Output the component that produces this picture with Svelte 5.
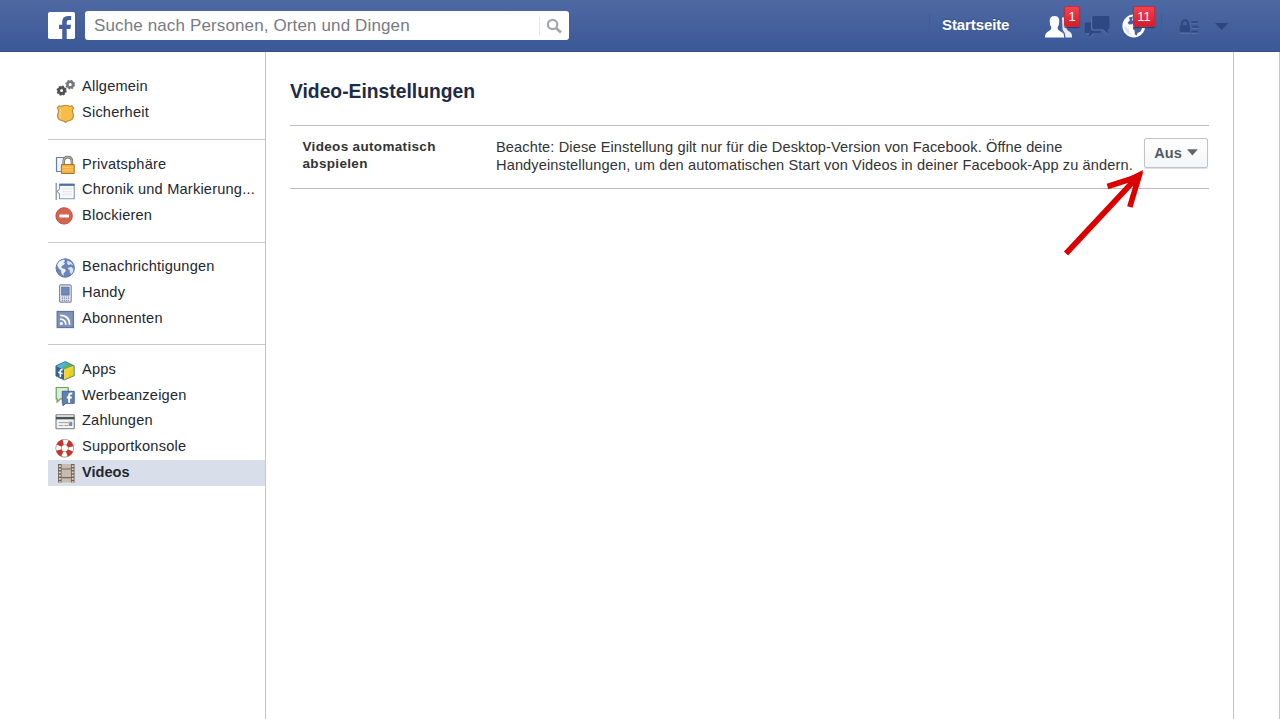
<script>
  const groups = [
    [
      { icon: 'gears', label: 'Allgemein' },
      { icon: 'badge', label: 'Sicherheit' }
    ],
    [
      { icon: 'lock', label: 'Privatsphäre' },
      { icon: 'timeline', label: 'Chronik und Markierung...' },
      { icon: 'block', label: 'Blockieren' }
    ],
    [
      { icon: 'globe', label: 'Benachrichtigungen' },
      { icon: 'phone', label: 'Handy' },
      { icon: 'feed', label: 'Abonnenten' }
    ],
    [
      { icon: 'apps', label: 'Apps' },
      { icon: 'ads', label: 'Werbeanzeigen' },
      { icon: 'card', label: 'Zahlungen' },
      { icon: 'ring', label: 'Supportkonsole' },
      { icon: 'film', label: 'Videos', active: true }
    ]
  ];
</script>

{#snippet itemIcon(name)}
  <svg class="icon" width="20" height="20" viewBox="0 0 20 20">
    {#if name === 'gears'}
      <circle cx="6.6" cy="12.6" r="2.9" fill="none" stroke="#505256" stroke-width="2.8" />
      <circle cx="6.6" cy="12.6" r="4.3" fill="none" stroke="#505256" stroke-width="1.6" stroke-dasharray="1.8 1.58" />
      <circle cx="15.2" cy="6.6" r="2.8" fill="none" stroke="#77797d" stroke-width="2.5" />
      <circle cx="15.2" cy="6.6" r="4.1" fill="none" stroke="#77797d" stroke-width="1.5" stroke-dasharray="1.7 1.52" />
    {:else if name === 'badge'}
      <path d="M4.2 2.7Q6 4 7.8 2.8Q10.5 1.7 13.2 2.8Q15 4 16.8 2.7L18.6 5Q16.8 7.5 17.8 10Q19.4 14 16.8 16.5Q14.6 17.9 12.8 17.8L10.5 19.5L8.2 17.8Q6.4 17.9 4.2 16.5Q1.6 14 3.2 10Q4.2 7.5 2.4 5Z" fill="#f8bd48" stroke="#bd8b42" stroke-width="1.2" />
      <path d="M5.2 5.5Q6.4 8.5 5 11.5Q4.2 14 6.2 15.5" fill="none" stroke="#ffda83" stroke-width="1" />
    {:else if name === 'lock'}
      <path d="M9 2.5H1.5V16.5H6" fill="#f3f6fc" stroke="#667fae" stroke-width="1.2" />
      <path d="M8.7 10V6.3Q8.7 2.1 12.8 2.1Q16.9 2.1 16.9 6.3V10" fill="none" stroke="#777568" stroke-width="2.6" />
      <path d="M8.7 10V6.3Q8.7 2.1 12.8 2.1Q16.9 2.1 16.9 6.3V10" fill="none" stroke="#c9c6b5" stroke-width=".9" />
      <rect x="6.4" y="9.5" width="12.8" height="9" rx=".6" fill="#f4ae42" stroke="#a9742f" stroke-width="1.1" />
      <path d="M7.5 12.3H18.2M7.5 15.2H18.2" stroke="#ffd06c" stroke-width="1" />
    {:else if name === 'timeline'}
      <path d="M1.2 2V19" stroke="#7189b4" stroke-width="1.2" />
      <path d="M4.5 3.3H19.3V17.7H4.5V13L2.2 10.5L4.5 8Z" fill="#f8f9fb" stroke="#8d96a8" stroke-width="1.1" />
      <path d="M4.5 3.8H19.3" stroke="#5270a8" stroke-width="2.2" />
      <path d="M7 7.5H17M7 10.5H17M7 13.5H17" stroke="#e8e9ed" stroke-width="1.4" />
    {:else if name === 'block'}
      <circle cx="9.1" cy="9.9" r="8.2" fill="#d3644f" stroke="#c05243" stroke-width="1" />
      <rect x="4.3" y="8.4" width="9.7" height="3" rx=".7" fill="#fff" />
    {:else if name === 'globe'}
      <circle cx="10.2" cy="10" r="9.2" fill="#6886ba" stroke="#5d75a5" stroke-width="1" />
      <path d="M2 7Q4 2.6 9 1.6L10.2 3.2L8.2 4L10 5.8L7.6 7.5L6 9.3L7.7 10.5L10 11L10.9 13L8.7 15.2L8.4 18L6.3 15L6.2 12.5L3.9 10.4L2.6 8Z" fill="#edf2fa" />
      <path d="M12.5 2.5L16.4 4.4L18.2 7.2L15.4 6.2L13.4 7.3L12 5.2ZM13.6 9.6L16.5 9L18.5 11Q18.4 14.4 16.3 16.3L14.7 14.2L14.7 12L12.9 11Z" fill="#dae3f2" />
    {:else if name === 'phone'}
      <rect x="4.6" y=".9" width="11.6" height="17.3" rx="1.3" fill="#f1f4f9" stroke="#7c8baa" stroke-width="1.2" />
      <rect x="6.7" y="3.1" width="7.4" height="8" fill="#7189b8" stroke="#526d9f" stroke-width=".8" />
      <path d="M6.6 13H14.2M6.6 14.7H14.2M6.6 16.4H14.2" stroke="#7586a7" stroke-width="1" stroke-dasharray="1.4 .7" />
    {:else if name === 'feed'}
      <rect x="2.2" y="2.5" width="16.2" height="16" fill="#8093ba" stroke="#61759f" stroke-width="1.3" />
      <circle cx="6.4" cy="14.5" r="1.5" fill="#fff" />
      <path d="M5.2 10.1Q10.8 10.1 10.8 15.8M5.2 6.3Q14.6 6.3 14.6 15.8" fill="none" stroke="#fff" stroke-width="1.7" />
    {:else if name === 'apps'}
      <path d="M.9 4.8L9.2 8.4V19L.9 15Z" fill="#355fa5" />
      <path d="M9.2 8.4L19.2 4.8V14.7L9.2 19Z" fill="#f5d629" />
      <path d="M19.2 4.8V14.7L14 17V12Z" fill="#dfd329" />
      <path d="M.9 4.8L10.2 .6L19.2 4.8L9.2 8.4Z" fill="#67ad5b" />
      <path d="M.9 4.8L10.2 .6L13 2L6.7 7.3Z" fill="#4bb4e2" />
      <path d="M.9 4.8L10.2 .6L19.2 4.8V14.7L9.2 19L.9 15Z" fill="none" stroke="#3d6e8d" stroke-width=".8" />
      <path d="M7.6 8.7Q5.2 8 5.4 10.5V16M3.2 11.2L7.7 12.6" fill="none" stroke="#fff" stroke-width="1.6" />
    {:else if name === 'ads'}
      <path d="M1.2 1.5H13.2V12.9H5.4L2.1 16V12.9H1.2Z" fill="#d9edd2" stroke="#6b9d69" stroke-width="1.2" />
      <path d="M7.3 5.3H19.2V17.3H11L7.9 19.7V17.3H7.3Z" fill="#627fb3" stroke="#45659e" stroke-width="1" />
      <path d="M17.3 7.6Q13.9 6.9 14.1 10.2V16.7M11.8 11.5H16.8" fill="none" stroke="#fff" stroke-width="2" />
    {:else if name === 'card'}
      <rect x="1" y="2.8" width="18.3" height="14" rx=".8" fill="#f3f3f2" stroke="#777b81" stroke-width="1.1" />
      <path d="M1 6.1H19.3" stroke="#4d5054" stroke-width="2.5" />
      <path d="M3.7 10.6H13M3.7 13.5H8.4M9.4 13.5H13" stroke="#9ca2a8" stroke-width="1" />
      <rect x="13.8" y="9.8" width="3.4" height="4.2" fill="#6d8ec2" />
      <path d="M13 10.6H15" stroke="#edb750" stroke-width="1.5" />
    {:else if name === 'ring'}
      <circle cx="9.7" cy="10.2" r="6.2" fill="none" stroke="#8d7770" stroke-width="6" />
      <circle cx="9.7" cy="10.2" r="6.2" fill="none" stroke="#fff" stroke-width="4.8" />
      <circle cx="9.7" cy="10.2" r="6.2" fill="none" stroke="#c5352c" stroke-width="5.4" stroke-dasharray="5.2 4.539" transform="rotate(21 9.7 10.2)" />
    {:else if name === 'film'}
      <path d="M3 1V19.5H19.5V1Z" fill="#c8bbb0" />
      <path d="M4.8 1V19.5M17.7 1V19.5" stroke="#6d6158" stroke-width="3.5" />
      <path d="M4.8 2.2V19.5M17.7 2.2V19.5" stroke="#e6dfd7" stroke-width="1.8" stroke-dasharray="1.7 1.5" />
      <path d="M6.5 6H16M6.5 14.7H16" stroke="#75695f" stroke-width="1.2" />
    {/if}
  </svg>
{/snippet}

<header>
  <svg class="logo" width="27" height="27" viewBox="0 0 27 27">
    <rect width="27" height="27" rx="1.8" fill="#fff" />
    <path d="M14.2 27V16.9H11V12.8H14.2V10Q14.2 3.9 20 3.9H23.2V8H21Q18.7 8 18.7 10.2V12.8H23L22.4 16.9H18.7V27Z" fill="#45619d" />
  </svg>
  <div class="search">
    <span>Suche nach Personen, Orten und Dingen</span>
    <svg width="30" height="20" viewBox="0 0 30 20">
      <path d="M.5 1V19" stroke="#e4e6ea" />
      <circle cx="13.6" cy="8.5" r="4.7" fill="none" stroke="#a3a6ac" stroke-width="2.2" />
      <path d="M17 11.9L22 16.6" stroke="#a3a6ac" stroke-width="2.7" />
    </svg>
  </div>
  <nav>
    <i class="sep"></i>
    <span class="home">Startseite</span>
    <div class="jewel people">
      <svg width="28" height="24" viewBox="0 0 28 24">
        <path d="M17 1.6Q23 0 23 6.5Q23 9.8 21.5 12Q21.4 14 23.5 15Q27.3 16.4 27 21.4H18Z" fill="#e9edf5" />
        <path d="M9.5 0Q14.3 0 14.3 5Q14.3 9 12.7 11.1Q12.2 14 14.8 15Q19 16.5 18.7 21.4H0Q-.1 16.5 4 15Q6.7 14 6.2 11.1Q4.7 9 4.7 5Q4.7 0 9.5 0Z" fill="#fff" />
        <path d="M16.2 2Q14.4 6 16.2 11Q16 13.6 17.6 15Q19.8 17 19.8 22" fill="none" stroke="#4864a0" stroke-width="1.3" />
      </svg>
      <b class="count one">1</b>
    </div>
    <svg class="chat" width="27" height="24" viewBox="0 0 27 24">
      <path d="M1 7.5H7V15.5H17V18.1H9L5.2 22.5V18.1H2Q.8 18.1.8 16.5V8Z" fill="#2d4882" />
      <path d="M9.5 1H24Q25.4 1 25.4 2.5V13Q25.4 14.4 24 14.4H23.7V19L19.4 14.4H9.5Q8.2 14.4 8.2 13V2.5Q8.2 1 9.5 1Z" fill="#2d4882" />
      <path d="M7.6 3V13Q7.6 15 9.5 15H19.2L23.8 19.6M2 18.7H5M5.6 23L9.4 18.8" stroke="#6079ae" stroke-width=".8" fill="none" />
    </svg>
    <div class="jewel world">
      <svg width="24" height="24" viewBox="0 0 24 24">
        <circle cx="11.8" cy="12" r="11.4" fill="#fff" />
        <path d="M7 3.5L11 2.5L10 6L12.5 8.5L9.8 10.2L7 10.4L5.6 8.4L7.8 6.4Z" fill="#45629f" />
        <path d="M11.2 13L14.2 12L18 13.6L20.4 13.4L18.6 17.4L15.6 19L14.6 21.8L12.8 20L12.6 16.6L10.8 15Z" fill="#45629f" />
        <path d="M2.2 10.2L4.8 13.4L7.2 15.2L7.4 18.4L10.2 21.8L6 20L2.8 15.6Z" fill="#dce3f0" />
      </svg>
      <b class="count two">11</b>
    </div>
    <i class="sep last"></i>
    <svg class="privacy" width="20" height="16" viewBox="0 0 20 16">
      <path d="M3.1 8V4.4Q3.1 1.2 6 1.2Q8.9 1.2 8.9 4.4V8" fill="none" stroke="#2e4881" stroke-width="2" />
      <rect x=".8" y="6.2" width="10.2" height="7.2" rx=".8" fill="#2e4881" />
      <path d="M1 14.2H11M12.5 4.6H19M13.5 9.2H19M12.5 14.2H19" stroke="#637db1" stroke-width=".8" />
      <path d="M12.5 3.2H19M13.5 7.8H19M12.5 12.6H19" stroke="#2e4881" stroke-width="1.9" />
    </svg>
    <svg class="menu" width="14" height="8" viewBox="0 0 14 8"><path d="M0 0H13.4L6.7 7Z" fill="#2c467e" /></svg>
  </nav>
</header>

<main>
  <aside>
    {#each groups as group}
      <ul>
        {#each group as item}
          <li class:active={item.active}>
            {@render itemIcon(item.icon)}
            <span>{item.label}</span>
          </li>
        {/each}
      </ul>
    {/each}
  </aside>
  <section>
    <h1>Video-Einstellungen</h1>
    <div class="setting">
      <h2>Videos automatisch<br />abspielen</h2>
      <p>
        <span>Beachte: Diese Einstellung gilt nur für die Desktop-Version von Facebook. Öffne deine</span><br />
        <span>Handyeinstellungen, um den automatischen Start von Videos in deiner Facebook-App zu ändern.</span>
      </p>
      <button>Aus<svg width="11" height="7" viewBox="0 0 11 7"><path d="M0 .3H10.8L5.4 6.4Z" fill="#62656c" /></svg></button>
    </div>
  </section>
</main>

<svg class="arrow" width="84" height="90" viewBox="0 0 84 90">
  <path d="M6 84.5L77 8.5M47.5 17.5L79 7.4L69.8 38" fill="none" stroke="#db0000" stroke-width="5.6" />
  <path d="M70 7.5L83 1L78.5 17Z" fill="#db0000" />
</svg>

<style>
  :global(body) {
    margin: 0;
    background: #fff;
    overflow: hidden;
    font-family: "Liberation Sans", Arial, sans-serif;
  }
  header {
    height: 52px;
    box-sizing: border-box;
    display: flex;
    align-items: flex-start;
    padding-left: 48px;
    background: linear-gradient(#4e69a2, #3c5998 94%);
    border-bottom: 1px solid #34508b;
  }
  .logo { margin-top: 12px; }
  .search {
    box-sizing: border-box;
    width: 484px;
    height: 29px;
    margin: 11px 0 0 10px;
    padding-left: 9px;
    display: flex;
    align-items: center;
    justify-content: space-between;
    border-radius: 3px;
    background: #fff;
    color: #777b84;
    font-size: 17px;
    letter-spacing: 0.13px;
    white-space: nowrap;
  }
  nav { display: flex; align-items: flex-start; margin-left: 360px; }
  .sep { width: 1px; height: 22px; margin-top: 14px; background: #405b95; }
  .home {
    width: 103px;
    padding: 15px 0 0 12px;
    box-sizing: border-box;
    color: #fff;
    font-size: 15px;
    line-height: 20px;
    font-weight: bold;
    letter-spacing: -0.1px;
    text-shadow: 0 -1px 1px #334e87;
  }
  .home + .jewel { margin-left: 12px; }
  .jewel { position: relative; display: flex; }
  .people { width: 28px; margin-top: 16px; }
  .world { width: 24px; margin: 14px 0 0 11px; }
  .chat { margin: 15px 0 0 11px; }
  .count {
    position: absolute;
    box-sizing: border-box;
    height: 21px;
    border-radius: 2px;
    background: linear-gradient(#f04450, #d51c2c);
    border: 1px solid #c7283a;
    box-shadow: 0 1px 1px #263c70;
    color: #fff;
    font-size: 13px;
    font-weight: normal;
    line-height: 19px;
    text-align: center;
  }
  .one { left: 19px; top: -10px; width: 16px; }
  .two { left: 11px; top: -8px; width: 22px; }
  .sep.last { margin-left: 15px; }
  .privacy { margin: 19px 0 0 17px; }
  .menu { margin: 22.5px 0 0 16px; }
  main {
    display: flex;
    box-sizing: border-box;
    width: 1280px;
    height: 667px;
    border-right: 1px solid #c6c6c8;
  }
  aside {
    box-sizing: border-box;
    flex: none;
    width: 266px;
    padding: 10px 0 0 48px;
    border-right: 1px solid #c6c6c8;
  }
  ul {
    margin: 0;
    padding: 12.5px 0 12.3px;
    list-style: none;
    border-bottom: 1px solid #c9c9cb;
  }
  ul:first-child { padding: 13px 0 12.6px; }
  ul:last-child { border: 0; }
  li {
    display: flex;
    align-items: center;
    height: 25.65px;
    padding-left: 7px;
    color: #24272f;
    font-size: 14.6px;
    letter-spacing: 0.2px;
    white-space: nowrap;
  }
  li span { margin-top: -3px; }
  .icon { flex: none; margin: 0 7px 0 0; }
  .active { height: 26px; background: #d8dfea; font-weight: bold; letter-spacing: 0; }
  section {
    box-sizing: border-box;
    flex: none;
    width: 968px;
    padding: 28px 24px 0;
    border-right: 1px solid #c6c6c8;
  }
  h1 { margin: 0; color: #1e2b47; font-size: 19.3px; line-height: 24px; letter-spacing: 0; }
  .setting {
    box-sizing: border-box;
    display: flex;
    width: 919px;
    height: 64px;
    margin-top: 20.5px;
    border: solid #bcbcbd;
    border-width: 1px 0;
    color: #333;
  }
  h2 {
    flex: none;
    width: 181px;
    margin: 12px 0 0;
    padding-left: 12.5px;
    font-size: 13.5px;
    line-height: 17px;
    letter-spacing: 0.33px;
  }
  p {
    flex: none;
    width: 660.5px;
    margin: 12px 0 0;
    padding-left: 12.5px;
    box-sizing: border-box;
    font-size: 14.6px;
    line-height: 18.2px;
    letter-spacing: 0.11px;
    white-space: nowrap;
  }
  button {
    box-sizing: border-box;
    display: flex;
    flex: none;
    align-items: center;
    justify-content: center;
    gap: 5px;
    width: 64px;
    height: 30px;
    margin: 12px 0 0;
    padding: 0;
    border: 1px solid #c2c3c7;
    border-radius: 2px;
    background: linear-gradient(#fff, #f4f5f7);
    box-shadow: 0 1px 1px #ddd;
    color: #565a62;
    font: bold 14.5px "Liberation Sans", Arial, sans-serif;
  }
  .arrow { position: absolute; left: 1060px; top: 168.5px; }
</style>
